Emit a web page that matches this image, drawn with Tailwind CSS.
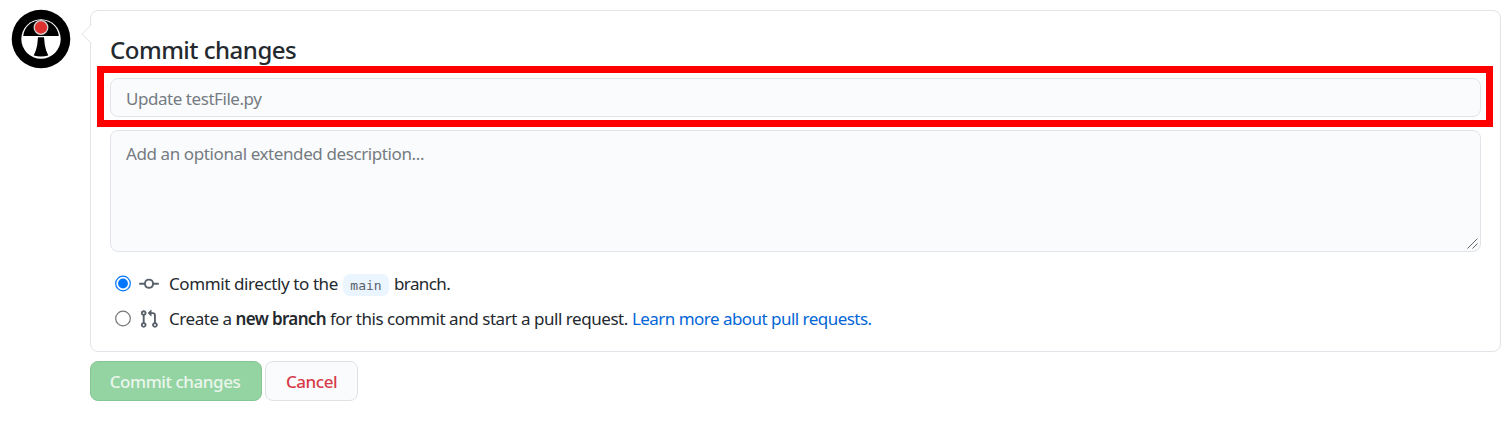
<!DOCTYPE html>
<html lang="en">
<head>
<meta charset="utf-8">
<title>Commit changes</title>
<script src="https://cdn.jsdelivr.net/npm/@tailwindcss/browser@4"></script>
</head>
<body class="bg-white text-[#24292e] font-['Segoe_UI','Noto_Sans',sans-serif] text-[17px] leading-[26px]">
<div class="flex h-[433px] pt-[10px] pl-[11px] pr-[11px] overflow-hidden">
  <svg class="block size-[60px] shrink-0 -mt-px" viewBox="0 0 60 60">
    <circle cx="30" cy="30" r="29.3" fill="#000"/>
    <circle cx="30" cy="30" r="19.7" fill="#fff"/>
    <path d="M12.200 27C13 18 20.500 11.300 30 11.300S47 18 47.800 27Z" fill="#000"/>
    <path d="M27 28.200H33L33.800 36Q34.500 41 37.300 46.500Q30 48.500 22.700 46.500Q25.500 41 26.200 36Z" fill="#000"/>
    <circle cx="30" cy="18.500" r="6.800" fill="#e03131" stroke="#d4d4d4" stroke-width="1.300"/>
  </svg>
  <main class="ml-[19px] flex-1">
    <form class="relative h-[342px] rounded-[8px] border border-[#e1e4e8] px-[19px] pt-[25px]">
      <svg class="absolute -left-[10px] top-[13px] h-[20px] w-[11px]" viewBox="0 0 11 20"><path d="M10.500 0.500L1 10L10.500 19.500" fill="#fff" stroke="#e1e4e8" stroke-width="1"/></svg>
      <h1 class="h-[42px] text-[24px] leading-[28px] font-medium tracking-[-0.5px]"><span class="whitespace-nowrap">Commit changes</span></h1>
      <div class="-ml-[13px] -mr-[12px] -mt-[12px] h-[61px] border-[7px] border-[#ff0000] pl-[6px] pr-[5px] pt-[5px]">
        <div class="flex h-[39px] items-center rounded-[8px] border border-[#e1e4e8] bg-[#fafbfc] px-[15px] pt-[3px] tracking-[-0.45px] text-[#757b82]"><span>Update testFile.py</span></div>
      </div>
      <div class="relative mt-[3px] h-[122px] rounded-[8px] border border-[#e1e4e8] bg-[#fafbfc] px-[15px] pt-[10px] tracking-[-0.4px] text-[#757b82]"><span>Add an optional extended description...</span>
        <svg class="absolute right-[2px] bottom-[2px] size-[11px]" viewBox="0 0 11 11"><path d="M0.500 10.500L10.500 0.500M5.500 10.500L10.500 5.500" stroke="#666" stroke-width="1"/></svg>
      </div>
      <div class="mt-[19px] flex h-[26px] items-center pl-[4px]">
        <svg class="size-[18px]" viewBox="0 0 18 18"><circle cx="9" cy="8.500" r="7.300" fill="#fff" stroke="#0075ff" stroke-width="1.200"/><circle cx="9" cy="8.500" r="4.900" fill="#0075ff"/></svg>
        <svg class="ml-[7px] size-[20px]" viewBox="0 0 16 16" fill="#586069"><path fill-rule="evenodd" d="M10.500 7.750a2.500 2.500 0 11-5 0 2.500 2.500 0 015 0zm1.430.750a4.002 4.002 0 01-7.860 0H.750a.750.750 0 110-1.500h3.320a4.001 4.001 0 017.860 0h3.320a.750.750 0 110 1.500h-3.320z"/></svg>
        <span class="ml-[10px] w-[174px] whitespace-nowrap tracking-[-0.4px]"><span>Commit directly to the</span></span>
        <code class="mt-[2px] flex h-[22px] w-[46px] items-center justify-center rounded-[7px] bg-[#eaf5ff] pt-px font-['DejaVu_Sans_Mono',monospace] text-[13px] text-[#586069]">main</code>
        <span class="ml-[5px] tracking-[-0.6px]">branch.</span>
      </div>
      <div class="mt-[9px] flex h-[26px] items-center pl-[4px]">
        <svg class="size-[18px]" viewBox="0 0 18 18"><circle cx="9" cy="8.500" r="7.300" fill="#fff" stroke="#767676" stroke-width="1.200"/></svg>
        <svg class="ml-[7px] size-[20px]" viewBox="0 0 16 16" fill="#586069"><path fill-rule="evenodd" d="M7.177 3.073L9.573.677A.250.250 0 0110 .854v4.792a.250.250 0 01-.427.177L7.177 3.427a.250.250 0 010-.354zM3.750 2.500a.750.750 0 100 1.500.750.750 0 000-1.500zm-2.250.750a2.250 2.250 0 113 2.122v5.256a2.251 2.251 0 11-1.500 0V5.372A2.250 2.250 0 011.500 3.250zM11 2.500h-1V4h1a1 1 0 011 1v5.628a2.251 2.251 0 101.500 0V5A2.500 2.500 0 0011 2.500zm1 10.250a.750.750 0 111.500 0 .750.750 0 01-1.500 0zM3.750 12a.750.750 0 100 1.500.750.750 0 000-1.500z"/></svg>
        <span class="ml-[10px] whitespace-nowrap"><span class="tracking-[-0.45px]">Create a </span><b class="font-semibold tracking-[-0.65px]">new branch</b><span class="tracking-[-0.45px]"> for this commit and start a pull request. </span><a class="text-[#0366d6] tracking-[-0.53px]">Learn more about pull requests.</a></span>
      </div>
    </form>
    <div class="mt-[9px] flex gap-[3px] font-medium tracking-[-0.45px]">
      <button class="h-[40px] w-[172px] whitespace-nowrap rounded-[8px] border border-[#85c493] bg-[#94d3a2] pt-[2px] pr-[2px] text-white/80">Commit changes</button>
      <button class="h-[40px] w-[93px] rounded-[8px] border border-[#dfe2e5] bg-[#fafbfc] pt-[2px] text-[#d73a49]">Cancel</button>
    </div>
  </main>
</div>
</body>
</html>
